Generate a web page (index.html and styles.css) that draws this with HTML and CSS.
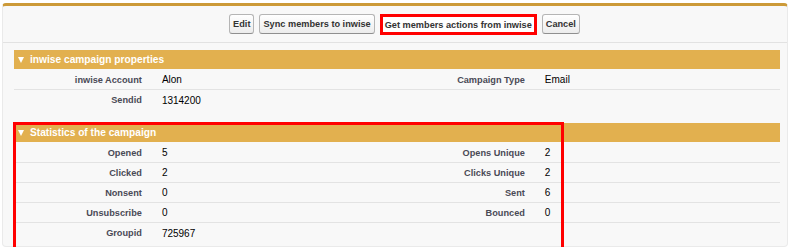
FILE: index.html
```html
<!DOCTYPE html>
<html lang="en">
<head>
    <meta charset="UTF-8">
    <title>inwise Campaign</title>
    <link rel="stylesheet" href="styles.css">
</head>
<body>
    <div class="panel">
        <div class="pb-header">
            <button class="btn">Edit</button>
            <button class="btn">Sync members to inwise</button>
            <button class="btn marked">Get members actions from inwise</button>
            <button class="btn">Cancel</button>
        </div>

        <div class="pb-body">
            <div class="section">
                <h3 class="sub-header"><span class="twist"></span>inwise campaign properties</h3>
                <div class="detail-list">
                    <div class="row">
                        <div class="label">inwise Account</div><div class="data">Alon</div>
                        <div class="label">Campaign Type</div><div class="data">Email</div>
                    </div>
                    <div class="row">
                        <div class="label">Sendid</div><div class="data">1314200</div>
                        <div class="label"></div><div class="data"></div>
                    </div>
                </div>
            </div>

            <div class="section">
                <h3 class="sub-header"><span class="twist"></span>Statistics of the campaign</h3>
                <div class="detail-list">
                    <div class="row">
                        <div class="label">Opened</div><div class="data">5</div>
                        <div class="label">Opens Unique</div><div class="data">2</div>
                    </div>
                    <div class="row">
                        <div class="label">Clicked</div><div class="data">2</div>
                        <div class="label">Clicks Unique</div><div class="data">2</div>
                    </div>
                    <div class="row">
                        <div class="label">Nonsent</div><div class="data">0</div>
                        <div class="label">Sent</div><div class="data">6</div>
                    </div>
                    <div class="row">
                        <div class="label">Unsubscribe</div><div class="data">0</div>
                        <div class="label">Bounced</div><div class="data">0</div>
                    </div>
                    <div class="row">
                        <div class="label">Groupid</div><div class="data">725967</div>
                        <div class="label"></div><div class="data"></div>
                    </div>
                </div>
            </div>
        </div>
    </div>

    <!-- annotation drawn over the screenshot -->
    <div class="highlight"></div>
</body>
</html>
```

FILE: styles.css
```css
body {
    font-family: 'Liberation Sans', Arial, sans-serif;
    margin: 0;
    padding: 3px 0 0 2px;
    background-color: #fff;
    color: #000;
    position: relative;
}
.panel {
    box-sizing: border-box;
    width: 786px;
    height: 244px;
    background-color: #f8f8f8;
    border: 1px solid #eaeaea;
    border-top: 3px solid #cc9a38;
    border-radius: 4px;
}
.pb-header {
    box-sizing: border-box;
    height: 37px;
    display: flex;
    justify-content: center;
    align-items: flex-start;
    gap: 5px;
    padding: 8px 0 0 19px;
    border-bottom: 1px solid #e2e2e2;
}
.btn {
    font-family: 'Liberation Sans', Arial, sans-serif;
    font-size: 9.2px;
    font-weight: bold;
    color: #333;
    height: 20px;
    padding: 0 3px;
    background: linear-gradient(#ffffff, #ececec);
    border: 1px solid #b5b5b5;
    border-bottom-color: #8f8f8f;
    border-radius: 3px;
    cursor: pointer;
}
.btn.marked {
    height: 21px;
    padding: 0 2px;
    background: #fff;
    border: 3px solid #ff0000;
    border-radius: 0;
}
.pb-body {
    margin: 7px 7px 0 11px;
}
.section {
    margin-bottom: 13px;
}
.sub-header {
    margin: 0;
    height: 19px;
    display: flex;
    align-items: center;
    padding-left: 4px;
    background-color: #e2b04f;
    color: #fff;
    font-size: 10.2px;
    font-weight: bold;
}
.twist {
    width: 0;
    height: 0;
    border-left: 3.5px solid transparent;
    border-right: 3.5px solid transparent;
    border-top: 6px solid #fff;
    margin-right: 6px;
}
.detail-list {
    padding-top: 1px;
}
.row {
    display: grid;
    grid-template-columns: 18% 32% 18% 32%;
    height: 20px;
    box-sizing: border-box;
    border-bottom: 1px solid #e3e3e3;
    align-items: center;
}
.row:last-child {
    border-bottom: none;
}
.label {
    text-align: right;
    padding-right: 10px;
    font-size: 9.2px;
    font-weight: bold;
    color: #4a4a56;
}
.data {
    padding-left: 10px;
    font-size: 10px;
    color: #000;
}
.highlight {
    position: absolute;
    left: 13px;
    top: 122px;
    width: 551px;
    height: 128px;
    box-sizing: border-box;
    border: 3px solid #ff0000;
}
```
